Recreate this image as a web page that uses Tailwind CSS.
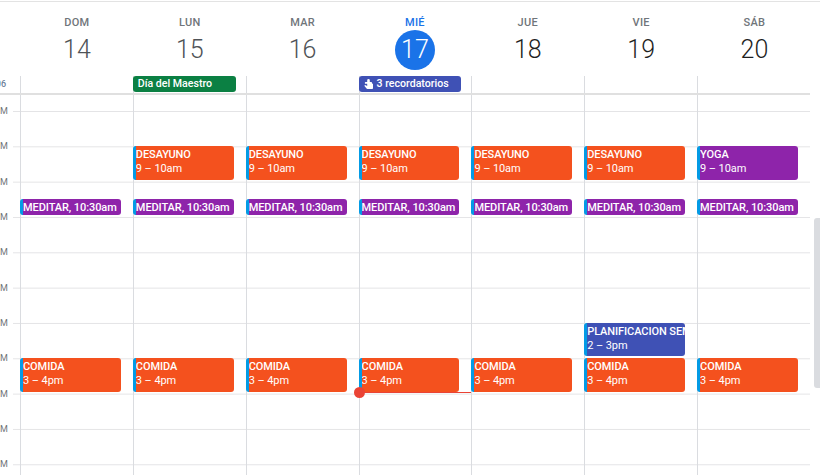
<!DOCTYPE html>
<html lang="es">
<head>
  <meta charset="UTF-8" />
  <title>Calendario</title>
  <script src="https://cdn.jsdelivr.net/npm/@tailwindcss/browser@4"></script>
</head>
<body class="bg-white overflow-hidden font-['Roboto',sans-serif]">
<div class="relative w-[820px] h-[475px] overflow-hidden pt-px">
  <div class="h-px bg-[#e3e3e3]"></div>

  <!-- day headers -->
  <div class="grid grid-cols-[20px_repeat(7,112.85px)] h-[74px] text-center">
    <div></div>
    <div class="pt-[13px] pl-px"><p class="text-[11px] leading-4 font-medium tracking-wide text-[#70757a]">DOM</p><p class="text-[25px] leading-[40px] font-light text-[#4f5357] -mt-px">14</p></div>
    <div class="pt-[13px] pl-px"><p class="text-[11px] leading-4 font-medium tracking-wide text-[#70757a]">LUN</p><p class="text-[25px] leading-[40px] font-light text-[#4f5357] -mt-px">15</p></div>
    <div class="pt-[13px] pl-px"><p class="text-[11px] leading-4 font-medium tracking-wide text-[#70757a]">MAR</p><p class="text-[25px] leading-[40px] font-light text-[#4f5357] -mt-px">16</p></div>
    <div class="pt-[13px]"><p class="text-[11px] leading-4 font-medium tracking-wide text-[#1a73e8]">MIÉ</p><p class="w-10 h-10 mx-auto rounded-full bg-[#1a73e8] text-white text-[25px] leading-[40px] font-light -mt-px">17</p></div>
    <div class="pt-[13px]"><p class="text-[11px] leading-4 font-medium tracking-wide text-[#70757a]">JUE</p><p class="text-[25px] leading-[40px] font-light text-[#1f1f1f] -mt-px">18</p></div>
    <div class="pt-[13px] pl-px"><p class="text-[11px] leading-4 font-medium tracking-wide text-[#70757a]">VIE</p><p class="text-[25px] leading-[40px] font-light text-[#1f1f1f] -mt-px">19</p></div>
    <div class="pt-[13px] pl-[2px]"><p class="text-[11px] leading-4 font-medium tracking-wide text-[#70757a]">SÁB</p><p class="text-[25px] leading-[40px] font-light text-[#1f1f1f] -mt-px">20</p></div>
  </div>

  <!-- all day row -->
  <div class="grid grid-cols-[20px_repeat(7,112.85px)] h-[17px] text-[10.6px] leading-[16px] font-medium text-white">
    <div class="w-[6px] flex justify-end text-[9px] text-[#6b7f99]"><span>06</span></div>
    <div class="border-l border-[#dadce0]"></div>
    <div class="border-l border-[#dadce0]"><div class="h-4 w-[103px] -ml-px rounded-[3px] bg-[#0b8043] pl-[5px] truncate">Día del Maestro</div></div>
    <div class="border-l border-[#dadce0]"></div>
    <div class="border-l border-[#dadce0]">
      <div class="h-4 w-[102px] -ml-px rounded-[3px] bg-[#3f51b5] pl-[5px] flex items-center gap-[4px]">
        <svg viewBox="0 0 9 10" class="w-[9px] h-[10px] fill-white"><path d="M3.200 1.300a1.300 1.300 0 0 1 2.600 0V3H7.200a.8.8 0 0 1 .8.8v.7h.2a.8.8 0 0 1 .8.8v3.900a.8.8 0 0 1-.8.8H3.500a1.200 1.200 0 0 1-1-.5L.3 6.800l.8-.8 2.100 1V4.800H1.700a.9.9 0 0 1 0-1.800h1.500z"/></svg>
        <span>3 recordatorios</span>
      </div>
    </div>
    <div class="border-l border-[#dadce0]"></div>
    <div class="border-l border-[#dadce0]"></div>
    <div class="border-l border-[#dadce0]"></div>
  </div>
  <div class="h-[2px] w-[810px] bg-[#e0e0e0]"></div>

  <!-- hour grid -->
  <div class="flex h-[380px]">
    <div class="w-[13px] shrink-0 text-[9px] text-[#70757a] leading-[12px] grid grid-rows-[10px_repeat(11,35.33px)] pr-[7px]">
      <span></span>
      <span class="flex justify-end"><span>M</span></span>
      <span class="flex justify-end"><span>M</span></span>
      <span class="flex justify-end"><span>M</span></span>
      <span class="flex justify-end"><span>M</span></span>
      <span class="flex justify-end"><span>M</span></span>
      <span class="flex justify-end"><span>M</span></span>
      <span class="flex justify-end"><span>M</span></span>
      <span class="flex justify-end"><span>M</span></span>
      <span class="flex justify-end"><span>M</span></span>
      <span class="flex justify-end"><span>M</span></span>
      <span class="flex justify-end"><span>M</span></span>
    </div>
    <div class="w-[797px] pl-[7px] grid grid-cols-[repeat(7,112.85px)] bg-[linear-gradient(#e4e4e6_1px,transparent_1px)] bg-[length:100%_35.33px] bg-[position:0_16px] text-[11px] leading-[14px] tracking-[-0.08px] font-medium text-white">

      <div class="border-l border-[#dadce0] grid grid-rows-[16px_repeat(11,35.33px)] pr-3">
        <div class="row-start-4 self-end h-4 mb-[2px] -ml-px rounded-[3px] bg-[#8e24aa] border-l-[3px] border-[#039be5] truncate leading-[17px]">MEDITAR, 10:30am</div>
        <div class="row-start-9 h-[33.500px] -ml-px rounded-[3px] bg-[#f4511e] border-l-[3px] border-[#039be5] pt-[2px] overflow-hidden">COMIDA<br /><span class="font-normal">3 – 4pm</span></div>
      </div>

      <div class="border-l border-[#dadce0] grid grid-rows-[16px_repeat(11,35.33px)] pr-3">
        <div class="row-start-3 h-[33.500px] -ml-px rounded-[3px] bg-[#f4511e] border-l-[3px] border-[#039be5] pt-[2px] overflow-hidden">DESAYUNO<br /><span class="font-normal">9 – 10am</span></div>
        <div class="row-start-4 self-end h-4 mb-[2px] -ml-px rounded-[3px] bg-[#8e24aa] border-l-[3px] border-[#039be5] truncate leading-[17px]">MEDITAR, 10:30am</div>
        <div class="row-start-9 h-[33.500px] -ml-px rounded-[3px] bg-[#f4511e] border-l-[3px] border-[#039be5] pt-[2px] overflow-hidden">COMIDA<br /><span class="font-normal">3 – 4pm</span></div>
      </div>

      <div class="border-l border-[#dadce0] grid grid-rows-[16px_repeat(11,35.33px)] pr-3">
        <div class="row-start-3 h-[33.500px] -ml-px rounded-[3px] bg-[#f4511e] border-l-[3px] border-[#039be5] pt-[2px] overflow-hidden">DESAYUNO<br /><span class="font-normal">9 – 10am</span></div>
        <div class="row-start-4 self-end h-4 mb-[2px] -ml-px rounded-[3px] bg-[#8e24aa] border-l-[3px] border-[#039be5] truncate leading-[17px]">MEDITAR, 10:30am</div>
        <div class="row-start-9 h-[33.500px] -ml-px rounded-[3px] bg-[#f4511e] border-l-[3px] border-[#039be5] pt-[2px] overflow-hidden">COMIDA<br /><span class="font-normal">3 – 4pm</span></div>
      </div>

      <div class="relative border-l border-[#dadce0] grid grid-rows-[16px_repeat(11,35.33px)] pr-3">
        <div class="row-start-3 h-[33.500px] -ml-px rounded-[3px] bg-[#f4511e] border-l-[3px] border-[#039be5] pt-[2px] overflow-hidden">DESAYUNO<br /><span class="font-normal">9 – 10am</span></div>
        <div class="row-start-4 self-end h-4 mb-[2px] -ml-px rounded-[3px] bg-[#8e24aa] border-l-[3px] border-[#039be5] truncate leading-[17px]">MEDITAR, 10:30am</div>
        <div class="row-start-9 h-[33.500px] -ml-px rounded-[3px] bg-[#f4511e] border-l-[3px] border-[#039be5] pt-[2px] overflow-hidden">COMIDA<br /><span class="font-normal">3 – 4pm</span></div>
        <!-- current time -->
        <div class="absolute left-0 right-0 top-[296.500px] h-[1.500px] bg-[#ea4335]"></div>
        <div class="absolute left-[-6px] top-[292px] w-[11px] h-[11px] rounded-full bg-[#ea4335]"></div>
      </div>

      <div class="border-l border-[#dadce0] grid grid-rows-[16px_repeat(11,35.33px)] pr-3">
        <div class="row-start-3 h-[33.500px] -ml-px rounded-[3px] bg-[#f4511e] border-l-[3px] border-[#039be5] pt-[2px] overflow-hidden">DESAYUNO<br /><span class="font-normal">9 – 10am</span></div>
        <div class="row-start-4 self-end h-4 mb-[2px] -ml-px rounded-[3px] bg-[#8e24aa] border-l-[3px] border-[#039be5] truncate leading-[17px]">MEDITAR, 10:30am</div>
        <div class="row-start-9 h-[33.500px] -ml-px rounded-[3px] bg-[#f4511e] border-l-[3px] border-[#039be5] pt-[2px] overflow-hidden">COMIDA<br /><span class="font-normal">3 – 4pm</span></div>
      </div>

      <div class="border-l border-[#dadce0] grid grid-rows-[16px_repeat(11,35.33px)] pr-3">
        <div class="row-start-3 h-[33.500px] -ml-px rounded-[3px] bg-[#f4511e] border-l-[3px] border-[#039be5] pt-[2px] overflow-hidden">DESAYUNO<br /><span class="font-normal">9 – 10am</span></div>
        <div class="row-start-4 self-end h-4 mb-[2px] -ml-px rounded-[3px] bg-[#8e24aa] border-l-[3px] border-[#039be5] truncate leading-[17px]">MEDITAR, 10:30am</div>
        <div class="row-start-8 h-[33.500px] -ml-px rounded-[3px] bg-[#3f51b5] border-l-[3px] border-[#039be5] pt-[2px] overflow-hidden whitespace-nowrap">PLANIFICACION SEM<br /><span class="font-normal">2 – 3pm</span></div>
        <div class="row-start-9 h-[33.500px] -ml-px rounded-[3px] bg-[#f4511e] border-l-[3px] border-[#039be5] pt-[2px] overflow-hidden">COMIDA<br /><span class="font-normal">3 – 4pm</span></div>
      </div>

      <div class="border-l border-[#dadce0] grid grid-rows-[16px_repeat(11,35.33px)] pr-3">
        <div class="row-start-3 h-[33.500px] -ml-px rounded-[3px] bg-[#8e24aa] border-l-[3px] border-[#039be5] pt-[2px] overflow-hidden">YOGA<br /><span class="font-normal">9 – 10am</span></div>
        <div class="row-start-4 self-end h-4 mb-[2px] -ml-px rounded-[3px] bg-[#8e24aa] border-l-[3px] border-[#039be5] truncate leading-[17px]">MEDITAR, 10:30am</div>
        <div class="row-start-9 h-[33.500px] -ml-px rounded-[3px] bg-[#f4511e] border-l-[3px] border-[#039be5] pt-[2px] overflow-hidden">COMIDA<br /><span class="font-normal">3 – 4pm</span></div>
      </div>
    </div>
  </div>

  <!-- scrollbar thumb -->
  <div class="absolute right-0 top-[218px] h-[170px] w-[6px] bg-[#dadce0] rounded-l-[3px]"></div>
</div>
</body>
</html>
